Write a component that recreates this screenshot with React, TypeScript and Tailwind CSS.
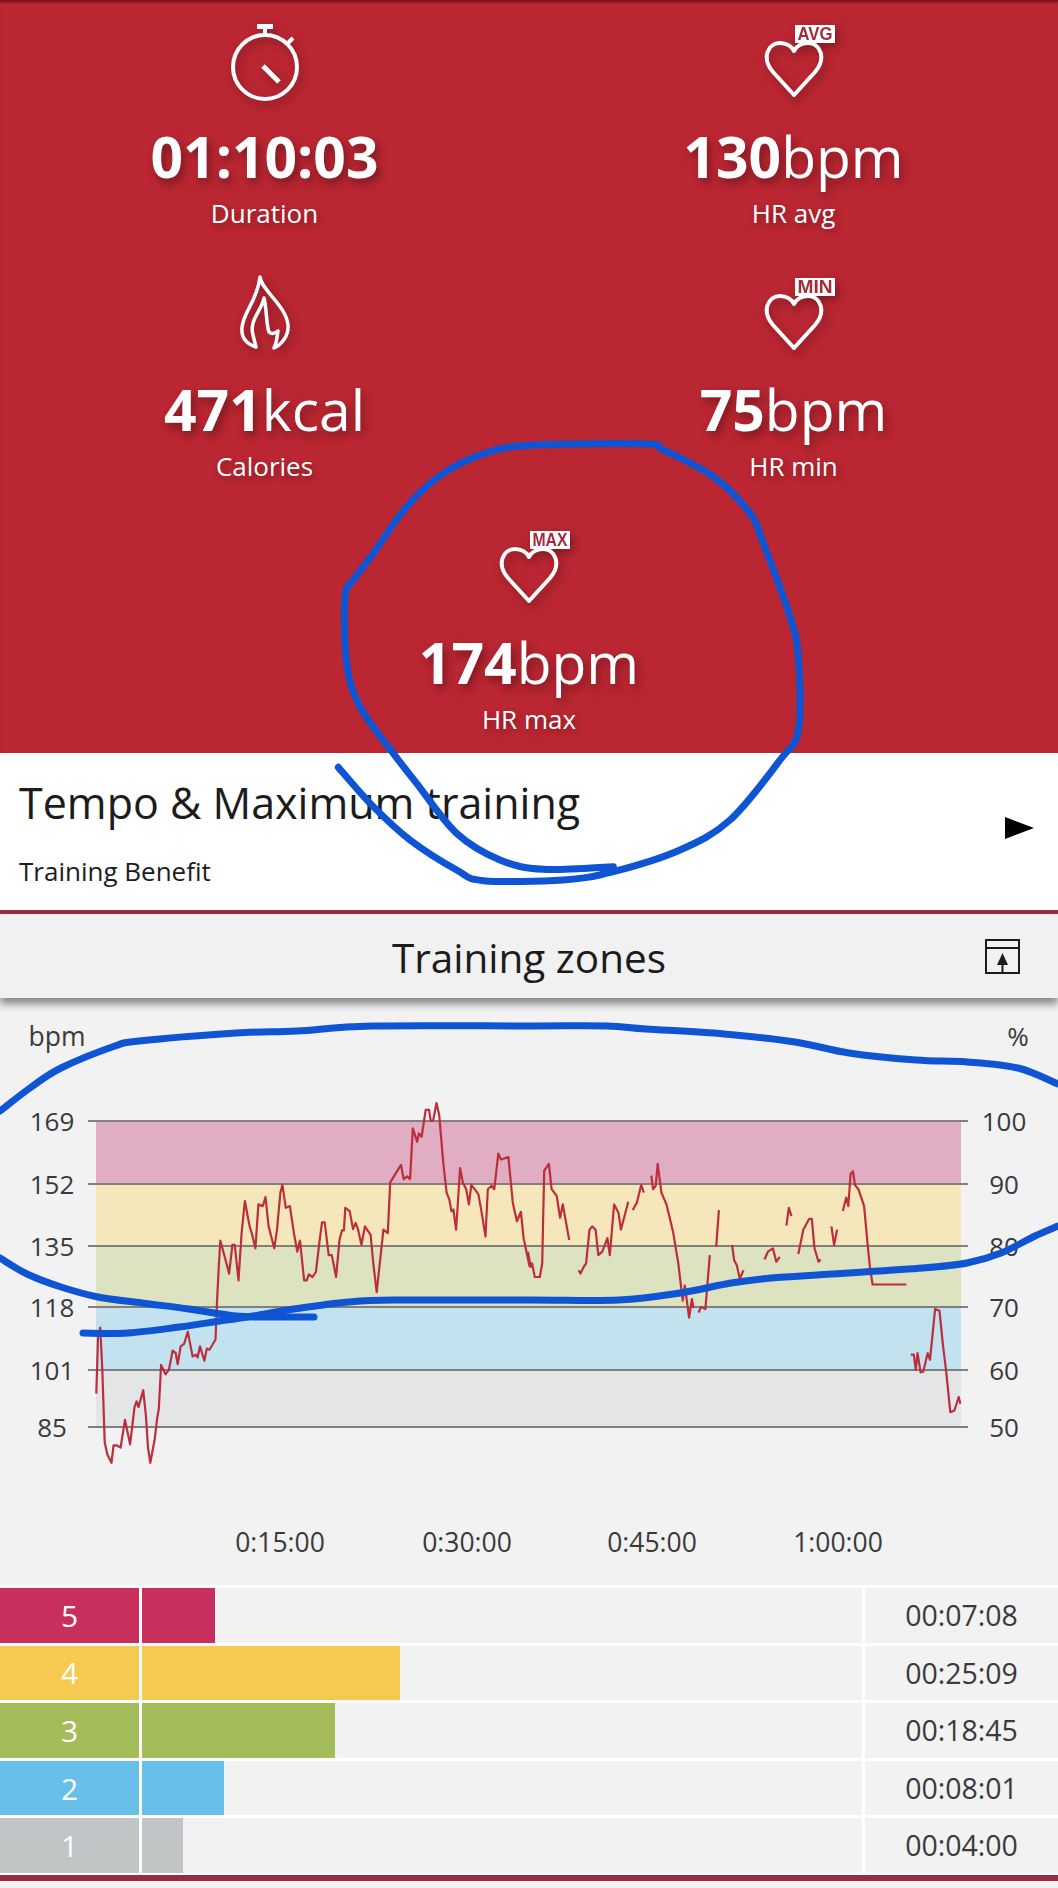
import React from "react";

type Pt = [number, number];

// trace of the heart rate line, read off the picture at ~3x, left half and right half
const LEFT_SEGS: Pt[][] = [
  [[285,1165],[290,1000],[297,970],[303,1100],[310,1310],[318,1345],[330,1370],[336,1318],[345,1318],[357,1325],[370,1243],[385,1315],[398,1205],[404,1188],[410,1205],[424,1155],[432,1230],[438,1325],[445,1370],[458,1300],[465,1240],[470,1210],[477,1080],[490,1108],[500,1095],[511,1038],[520,1045],[526,1078],[535,1025],[545,1018],[556,982],[570,1055],[580,1050],[585,1058],[592,1025],[605,1068],[612,1032],[620,1035],[638,1005],[642,900],[647,800],[652,712],[665,760],[678,810],[688,725],[695,725],[706,830],[715,690],[725,595],[738,665],[745,690],[756,735],[765,605],[778,610],[786,583],[795,670],[812,735],[820,680],[830,570],[836,547],[846,615],[858,610],[870,690],[880,745],[888,712],[900,830],[908,830],[914,812],[925,820],[935,805],[945,720],[953,658],[961,658],[973,755],[982,755],[995,820],[1005,710],[1012,682],[1018,682],[1022,615],[1035,625],[1045,678],[1053,660],[1060,680],[1070,725],[1080,670],[1097,695],[1105,780],[1115,865],[1135,680],[1148,690],[1155,540],[1187,488],[1195,530],[1205,522],[1214,530],[1222,380],[1235,420],[1240,395],[1248,405],[1260,325],[1270,325],[1275,358],[1282,358],[1292,305],[1300,340],[1312,480],[1322,570],[1330,590],[1336,625],[1342,620],[1350,680],[1362,498],[1370,540],[1380,560],[1388,605],[1395,548],[1405,560],[1416,575],[1425,625],[1437,700],[1444,560],[1455,550],[1463,560],[1475,455],[1483,472],[1505,465],[1518,600],[1530,655],[1542,627],[1550,705],[1568,790]],
];

const RIGHT_SEGS: Pt[][] = [
  [[0,745],[8,790],[12,780],[20,820],[35,820],[42,780],[48,505],[62,485],[70,560],[85,580],[95,645],[103,605],[122,710]],
  [[150,800],[155,810],[165,790],[172,780],[182,680],[190,670],[200,680],[208,755],[220,745],[235,705],[242,755],[255,605],[268,630],[275,680],[297,597]],
  [[310,622],[322,600],[335,548],[343,570]],
  [[365,520],[370,560],[378,550],[384,485],[395,570],[410,605],[430,690],[445,780],[458,890],[464,845],[477,940],[485,885],[490,912]],
  [[505,925],[512,908],[525,915],[538,755]],
  [[557,730],[565,622]],
  [[604,725],[610,770],[618,785],[627,825],[638,800]],
  [[700,768],[710,745],[725,735],[735,775],[745,760]],
  [[765,668],[772,615],[780,640]],
  [[800,752],[815,680],[832,648],[840,648],[848,735],[860,775],[866,768]],
  [[898,670],[906,725],[915,680]],
  [[932,625],[942,585],[948,610],[955,515],[962,507],[968,548],[978,560],[995,610],[1005,720],[1012,790],[1020,842],[1120,842]],
  [[1133,1050],[1142,1050],[1148,1095],[1153,1045],[1162,1102],[1170,1100],[1183,1045],[1190,1065],[1205,915],[1218,920],[1228,1020],[1238,1100],[1245,1170],[1250,1220],[1262,1215],[1275,1175],[1280,1195]],
];

const toPoints = (pts: Pt[], ox: number) =>
  pts.map(([x, y]) => `${(ox + x / 2.96).toFixed(1)},${(1000 + y / 2.96).toFixed(1)}`).join(" ");

// catmull-rom through the points, the pen strokes are hand drawn
const smooth = (p: Pt[]) => {
  let d = `M${p[0][0]} ${p[0][1]}`;
  for (let i = 0; i < p.length - 1; i++) {
    const a = p[Math.max(i - 1, 0)];
    const b = p[i];
    const c = p[i + 1];
    const e = p[Math.min(i + 2, p.length - 1)];
    d += ` C${(b[0] + (c[0] - a[0]) / 6).toFixed(1)} ${(b[1] + (c[1] - a[1]) / 6).toFixed(1)} ${(c[0] - (e[0] - b[0]) / 6).toFixed(1)} ${(c[1] - (e[1] - b[1]) / 6).toFixed(1)} ${c[0]} ${c[1]}`;
  }
  return d;
};

const circleStroke: Pt[] = ([
  [850,1310],[640,1318],[510,1290],[380,1210],[260,1060],[190,970],[90,830],[50,700],[45,500],[70,450],[130,370],[230,230],[340,130],[480,65],[620,45],[950,42],[1000,60],[1150,140],[1260,250],[1300,340],[1380,560],[1405,680],[1405,900],[1350,990],[1200,1170],[1050,1260],[850,1325],[700,1350],[460,1352],[380,1320],[240,1230],[130,1130],[25,1012],
] as Pt[]).map(([x, y]) => [330 + x / 3, 430 + y / 3] as Pt);

const penStrokes: Pt[][] = [
  circleStroke,
  [[0,1111],[30,1088],[61,1068],[115,1046],[139,1041],[236,1033],[297,1031],[372,1026],[530,1026],[606,1026],[646,1029],[724,1034],[795,1042],[849,1053],[916,1060],[967,1062],[1018,1068],[1058,1084]],
  [[0,1258],[27,1274],[61,1287],[98,1297],[142,1303],[189,1309],[236,1316],[270,1317],[314,1317]],
  [[83,1333],[128,1333],[179,1327],[220,1321],[253,1316],[294,1309],[348,1302],[395,1300],[530,1300],[619,1300],[680,1293],[731,1283],[771,1278],[832,1274],[923,1268],[967,1263],[1001,1253],[1035,1236],[1058,1226]],
];

const bands = [
  { y: 1121, h: 63, fill: "#e1adc2" },
  { y: 1184, h: 62, fill: "#f6e7ba" },
  { y: 1246, h: 61, fill: "#dde3c1" },
  { y: 1307, h: 63, fill: "#c3e2f0" },
  { y: 1370, h: 57, fill: "#e4e5e7" },
];

const ticks = [
  { y: 1121, bpm: "169", pct: "100" },
  { y: 1184, bpm: "152", pct: "90" },
  { y: 1246, bpm: "135", pct: "80" },
  { y: 1307, bpm: "118", pct: "70" },
  { y: 1370, bpm: "101", pct: "60" },
  { y: 1427, bpm: "85", pct: "50" },
];

const zones = [
  { n: "5", time: "00:07:08", color: "bg-[#c92f5c]", width: "w-[73px]" },
  { n: "4", time: "00:25:09", color: "bg-[#f6c950]", width: "w-[258px]" },
  { n: "3", time: "00:18:45", color: "bg-[#a4bc5a]", width: "w-[193px]" },
  { n: "2", time: "00:08:01", color: "bg-[#68bfe9]", width: "w-[82px]" },
  { n: "1", time: "00:04:00", color: "bg-[#c1c5c6]", width: "w-[41px]" },
];

const Stopwatch = () => (
  <svg viewBox="21 14 66 78" className="h-[78px] w-[66px] overflow-visible drop-shadow-[3px_4px_4px_rgba(0,0,0,0.3)]" fill="none" stroke="#fff" strokeWidth="4">
    <circle cx="54" cy="57" r="32" />
    <path d="M46 16.5H62" strokeWidth="5" />
    <path d="M54 18V25" />
    <path d="M77 33L82 28" />
    <path d="M52 56L68 72" strokeWidth="5" />
  </svg>
);

const Flame = () => (
  <svg viewBox="21 17 66 78" className="h-[78px] w-[66px] overflow-visible drop-shadow-[3px_4px_4px_rgba(0,0,0,0.3)]" fill="none" stroke="#fff" strokeWidth="3.5" strokeLinejoin="round">
    <path d="M49 17C50 30 75 45 77 65C78 76 70 85 63 88C66 82 66 76 67 71C64 74 60 74 58 72C55 64 56 50 53 38C50 52 38 60 42 75L45 87C36 84 30 78 31 68C32 52 46 42 49 17Z" />
  </svg>
);

const Heart = ({ tag }: { tag: string }) => (
  <svg viewBox="19 14 66 78" className="h-[78px] w-[66px] overflow-visible drop-shadow-[3px_4px_4px_rgba(0,0,0,0.3)]">
    <path d="M52 85L31 62C19 48 26 33 38 33C45 33 50 37 52 41C54 37 59 33 66 33C78 33 85 48 73 62Z" fill="none" stroke="#fff" strokeWidth="4" strokeLinejoin="round" />
    <rect x="53" y="15" width="40" height="18" fill="#fff" />
    <text x="73" y="30" textAnchor="middle" fontSize="19" fontWeight="700" fill="#a52a3a" textLength="35" lengthAdjust="spacingAndGlyphs" className="font-['Liberation_Sans',sans-serif]">{tag}</text>
  </svg>
);

const Stat = ({ icon, value, unit, label }: { icon: React.ReactNode; value: string; unit?: string; label: string }) => (
  <div className="flex h-[253px] flex-col items-center pt-[24px] text-white">
    {icon}
    <div className="mt-[22px] text-[57px] leading-[64px] [text-shadow:3px_5px_8px_rgba(0,0,0,0.35)]">
      <span className="font-bold">{value}</span>
      {unit}
    </div>
    <div className="mt-[8px] text-[26px] leading-[34px] [text-shadow:2px_3px_6px_rgba(0,0,0,0.3)]">{label}</div>
  </div>
);

export default function App() {
  return (
    <div className="relative h-[1888px] w-[1058px] overflow-hidden bg-[#f2f2f2] font-['Open_Sans',sans-serif] text-[#1c1c1c]">
      {/* stats */}
      <section className="h-[753px] overflow-hidden bg-[#ba2631] [box-shadow:inset_0_4px_3px_-2px_rgba(60,0,10,0.6)]">
        <div className="grid grid-cols-2">
          <Stat icon={<Stopwatch />} value="01:10:03" label="Duration" />
          <Stat icon={<Heart tag="AVG" />} value="130" unit="bpm" label="HR avg" />
          <Stat icon={<Flame />} value="471" unit="kcal" label="Calories" />
          <Stat icon={<Heart tag="MIN" />} value="75" unit="bpm" label="HR min" />
        </div>
        <Stat icon={<Heart tag="MAX" />} value="174" unit="bpm" label="HR max" />
      </section>

      {/* training benefit */}
      <div className="flex h-[157px] items-center justify-between bg-white pl-[19px] pr-[24px]">
        <div>
          <div className="text-[43px] leading-[54px]">Tempo &amp; Maximum training</div>
          <div className="mt-[24px] text-[26px] leading-[34px]">Training Benefit</div>
        </div>
        <svg viewBox="0 0 29 22" className="-mt-[7px] h-[22px] w-[29px]">
          <path d="M0 0L29 11L0 22Z" fill="#000" />
        </svg>
      </div>
      <div className="h-[4px] bg-[#9c2b3d]" />

      {/* zones header */}
      <div className="relative z-10 flex h-[84px] items-center justify-center bg-[#f1f1f1] pt-[3px] shadow-[0_6px_8px_rgba(0,0,0,0.45)]">
        <span className="text-[40.5px] leading-[54px]">Training zones</span>
        <svg viewBox="0 0 35 35" className="absolute right-[38px] top-[25px] h-[35px] w-[35px]" fill="none" stroke="#1c1c1c" strokeWidth="2">
          <rect x="1" y="1" width="33" height="33" />
          <path d="M1 9H34" />
          <path d="M17.5 24V34" />
          <path d="M17.5 14L23 26H12Z" fill="#1c1c1c" stroke="none" />
        </svg>
      </div>

      {/* chart */}
      <svg viewBox="0 998 1058 587" className="block h-[587px] w-[1058px] font-['Open_Sans',sans-serif]">
        {bands.map((b) => (
          <rect key={b.y} x="96" y={b.y} width="865" height={b.h} fill={b.fill} />
        ))}
        {ticks.map((t) => (
          <g key={t.y}>
            <path d={`M88 ${t.y}H968`} stroke="#808080" strokeWidth="2" />
            <text x="52" y={t.y + 10} textAnchor="middle" fontSize="26" fill="#3a3a3a">{t.bpm}</text>
            <text x="1004" y={t.y + 10} textAnchor="middle" fontSize="26" fill="#3a3a3a">{t.pct}</text>
          </g>
        ))}
        <text x="57" y="1046" textAnchor="middle" fontSize="26.5" fill="#3a3a3a">bpm</text>
        <text x="1018" y="1046" textAnchor="middle" fontSize="26" fill="#3a3a3a">%</text>
        {[
          { x: 280, t: "0:15:00" },
          { x: 467, t: "0:30:00" },
          { x: 652, t: "0:45:00" },
          { x: 838, t: "1:00:00" },
        ].map((l) => (
          <text key={l.t} x={l.x} y="1552" textAnchor="middle" fontSize="26.5" fill="#3a3a3a">{l.t}</text>
        ))}
        <g fill="none" stroke="#bd2e3c" strokeWidth="2.2" strokeLinejoin="round">
          {LEFT_SEGS.map((s, i) => <polyline key={i} points={toPoints(s, 0)} />)}
          {RIGHT_SEGS.map((s, i) => <polyline key={i} points={toPoints(s, 528)} />)}
        </g>
      </svg>

      {/* zone bars */}
      <div className="flex flex-col border-b-[2px] border-white">
        {zones.map((z) => (
          <div key={z.n} className="flex h-[57.6px] border-t-[3px] border-white">
            <div className={`flex w-[139px] items-center justify-center text-[30px] text-white ${z.color}`}>{z.n}</div>
            <div className="w-[3px] bg-white" />
            <div className="flex-1">
              <div className={`h-full ${z.width} ${z.color}`} />
            </div>
            <div className="flex w-[196px] items-center justify-center border-l-[3px] border-white text-[28.5px] text-[#3a3a3a]">{z.time}</div>
          </div>
        ))}
      </div>
      <div className="h-[6px] bg-[#9c2b3d]" />

      {/* pen marks someone drew over the screenshot */}
      <svg viewBox="0 0 1058 1888" className="pointer-events-none absolute inset-0 h-[1888px] w-[1058px]" fill="none" stroke="#0f55d3" strokeWidth="7" strokeLinecap="round" strokeLinejoin="round">
        {penStrokes.map((s, i) => <path key={i} d={smooth(s)} />)}
      </svg>
    </div>
  );
}
